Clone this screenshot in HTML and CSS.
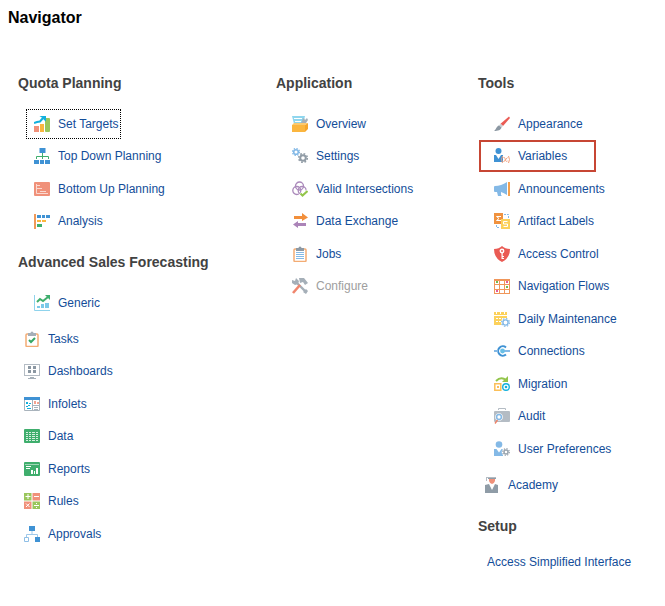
FILE: index.html
```html
<!DOCTYPE html>
<html lang="en">
<head>
  <meta charset="UTF-8">
  <title>Navigator</title>
  <link rel="stylesheet" href="styles.css">
</head>
<body>

  <h1>Navigator</h1>

  <nav class="navigator">
    <div class="column">
      <h2>Quota Planning</h2>
      <ul class="links">
        <li><a href="#" class="focused">
          <svg class="icon" viewBox="0 0 16 16"><path fill="#f0917a" d="M0 10h5v6H0z"/><path fill="#fbb63f" d="M6 8h4v8H6z"/><rect x="11" y="2" width="5" height="14" rx="1" fill="#9ac65c"/><path fill="none" stroke="#12b0dd" stroke-width="2" d="M0 7l3-1 3-.5L9 2"/><path fill="#12b0dd" d="M5.500 0H12v5.500L10 4 8.500 2z"/></svg>
          Set Targets</a></li>
        <li><a href="#">
          <svg class="icon" viewBox="0 0 16 16"><path fill="#3f92d4" d="M5.500 0h6v5h-6zM0 12h5v4H0zM6 12h4v4H6zM11 12h5v4h-5z"/><path fill="none" stroke="#3fae6d" d="M8.500 5v6M2.500 11V8.500h12V11"/></svg>
          Top Down Planning</a></li>
        <li><a href="#">
          <svg class="icon" viewBox="0 0 16 16"><rect y="1" width="16" height="14" rx="1" fill="#f0917a"/><path fill="none" stroke="#fbd9d0" d="M2.500 3v9.500H14M3 4.500h3M3 7.500h5M6 10.500h6"/></svg>
          Bottom Up Planning</a></li>
        <li><a href="#">
          <svg class="icon" viewBox="0 0 16 16"><path fill="#f09a58" d="M0 1h2v15H0z"/><path fill="#3f92d4" d="M3 2h4v3H3zM8 2h3v3H8zM12 2h4v3h-4z"/><path fill="#fbb63f" d="M3 7h4v2H3zM8 7h4v2H8z"/><path fill="#3fae6d" d="M3 11h5v3H3z"/></svg>
          Analysis</a></li>
      </ul>

      <h2>Advanced Sales Forecasting</h2>
      <ul class="links">
        <li><a href="#">
          <svg class="icon" viewBox="0 0 16 16"><path fill="none" stroke="#8fd3ec" d="M.5 0v15.500H16"/><path fill="#7dc9e8" d="M3 11h3v2H3zM7 9h3v4H7zM11 8h4v5h-4z"/><path fill="none" stroke="#3fae6d" stroke-width="2" d="M3 7l3-3 3 2 5-4"/><path fill="#3fae6d" d="M11 0h5v5z"/></svg>
          Generic</a></li>
      </ul>

      <ul class="links top-links">
        <li><a href="#">
          <svg class="icon" viewBox="0 0 16 16"><rect x="2" y="3" width="12" height="12.500" rx="1" fill="#fff" stroke="#f3ac74" stroke-width="1.500"/><path fill="#a5afb8" d="M4 2h2.500a1.500 1.500 0 0 1 3 0H12v3H4z"/><path fill="none" stroke="#35a766" stroke-width="2" d="M5 9l2 2 4-4"/></svg>
          Tasks</a></li>
        <li><a href="#">
          <svg class="icon" viewBox="0 0 16 16"><rect x=".5" y="1.500" width="15" height="11" fill="#fff" stroke="#b4bcc4"/><path fill="#8b97a2" d="M4 3h3v3H4zM9 3h3v3H9zM4 7h3v3H4zM9 7h3v3H9z"/><path fill="#a5afb8" d="M6 14h4v1h2v1H4v-1h2z"/></svg>
          Dashboards</a></li>
        <li><a href="#">
          <svg class="icon" viewBox="0 0 16 16"><path fill="#fff" stroke="#a9b3bc" d="M.5 1.500h15v13H.5z"/><path fill="#3f92d4" d="M0 1h16v3H0z"/><path fill="#12b0dd" d="M2 6h2v2H2zM5 7h2v1H5zM2 10h2v1H2zM4 9h2v1H4zM3 12h4v1H3z"/><path stroke="#a9b3bc" d="M8.500 4v11M9 9.500h7"/><path fill="#f3a391" d="M10 5h2v3h-2zM13 6h2v2h-2z"/><path fill="#a9b3bc" d="M10 11h4v1h-4zM10 13h4v1h-4z"/></svg>
          Infolets</a></li>
        <li><a href="#">
          <svg class="icon" viewBox="0 0 16 16"><rect y="1" width="16" height="14" rx="1" fill="#3fae6d"/><path fill="#d5efdf" d="M2 4h2v1H2zM5 4h2v1H5zM8 4h3v1H8zM12 4h2v1h-2zM2 6h2v1H2zM5 6h2v1H5zM8 6h3v1H8zM12 6h2v1h-2zM2 8h2v1H2zM5 8h2v1H5zM8 8h3v1H8zM12 8h2v1h-2zM2 10h2v1H2zM5 10h2v1H5zM8 10h3v1H8zM12 10h2v1h-2zM2 12h2v1H2zM5 12h2v1H5zM8 12h3v1H8zM12 12h2v1h-2z"/></svg>
          Data</a></li>
        <li><a href="#">
          <svg class="icon" viewBox="0 0 16 16"><rect y="1" width="16" height="14" rx="1" fill="#3fae6d"/><path fill="#fff" d="M2 5h5v1H2zM2 7h4v1H2zM7 9h2v4H7zM10 10h1v3h-1zM12 7h2v6h-2z"/><path fill="#9fd6b5" d="M1 3h14v1H1z"/></svg>
          Reports</a></li>
        <li><a href="#">
          <svg class="icon" viewBox="0 0 16 16"><path fill="#9ac65c" d="M0 0h7.500v7.500H0zM8.500 8.500H16V16H8.500z"/><path fill="#f0917a" d="M8.500 0H16v7.500H8.500zM0 8.500h7.500V16H0z"/><path stroke="#fff" d="M1.500 3.500h5M4 1v5M10 3.500h5M2 10.500l3.500 3.500M5.500 10.500L2 14M10 12.500h5M12.500 10v1M12.500 14v1"/></svg>
          Rules</a></li>
        <li><a href="#">
          <svg class="icon" viewBox="0 0 16 16"><path fill="#3f92d4" d="M5 0h6v5H5zM11 11h5v5h-5z"/><path fill="none" stroke="#9fc9ea" d="M8 5v3M2.500 11V8.500h11V11"/><path fill="#fff" stroke="#8fbfe6" d="M.5 11.500h4v4h-4z"/></svg>
          Approvals</a></li>
      </ul>
    </div>

    <div class="column">
      <h2>Application</h2>
      <ul class="links">
        <li><a href="#">
          <svg class="icon" viewBox="0 0 16 16"><path fill="#8fd6ee" d="M0 0h13l-2 8H2z"/><path fill="none" stroke="#fff" d="M2 2.500h8M3 5.500h6"/><path fill="none" stroke="#a5afb8" stroke-width="2" d="M8 9l4-4"/><path fill="#a5afb8" d="M15 2l-2 2-1-2-2 2 1 3 3 0 2-3z"/><path fill="#fbb63f" d="M0 9h13v7H0z"/><path fill="#fcc96f" d="M0 9l2-2h14l-3 2z"/><path fill="#f5a52c" d="M13 9l3-2v6l-3 3z"/></svg>
          Overview</a></li>
        <li><a href="#">
          <svg class="icon" viewBox="0 0 16 16"><circle cx="4" cy="4" r="2.300" fill="none" stroke="#84b9e6" stroke-width="1.600"/><circle cx="4" cy="4" r="3.500" fill="none" stroke="#84b9e6" stroke-width="1.200" stroke-dasharray="1.400 1.350"/><circle cx="11" cy="10" r="2.800" fill="none" stroke="#919ca6" stroke-width="2"/><circle cx="11" cy="10" r="4.300" fill="none" stroke="#919ca6" stroke-width="1.600" stroke-dasharray="1.700 1.680"/></svg>
          Settings</a></li>
        <li><a href="#">
          <svg class="icon" viewBox="0 0 16 16"><g fill="none" stroke="#ab8abb" stroke-width="1.300"><circle cx="7.500" cy="5" r="4"/><circle cx="4.800" cy="9.500" r="4"/><circle cx="10.200" cy="9.500" r="4"/></g><path fill="none" stroke="#fff" stroke-width="4" d="M8 12.500l2.500 2.500L16 10"/><path fill="none" stroke="#93c54b" stroke-width="2" d="M8.500 12.500l2 2L15.500 10"/></svg>
          Valid Intersections</a></li>
        <li><a href="#">
          <svg class="icon" viewBox="0 0 16 16"><path fill="#f28f3b" d="M2 3h8V0l6 4.500L10 8V6H2z"/><path fill="#ab84b8" d="M14 10H6V8l-5 3.500L6 15v-2h8z"/></svg>
          Data Exchange</a></li>
        <li><a href="#">
          <svg class="icon" viewBox="0 0 16 16"><rect x="2" y="3" width="12" height="12.500" rx="1" fill="#fff" stroke="#f3ac74" stroke-width="1.500"/><path fill="#8d99a4" d="M4 2h2.500a1.500 1.500 0 0 1 3 0H12v3H4z"/><path stroke="#84b9e6" d="M4 6.500h8M4 8.500h8M4 10.500h8M4 12.500h8"/></svg>
          Jobs</a></li>
        <li><a class="disabled" aria-disabled="true">
          <svg class="icon" viewBox="0 0 16 16"><path fill="none" stroke="#a5afb8" stroke-width="2.400" d="M4 4l10 10"/><path fill="#a5afb8" d="M0 2l3 1 1-3 3 3-1 3-3 1-3-2zM7 0h5l4 5-3 2-2-3-3 1zM14 11l2 2-2 3-3-2z"/><path fill="none" stroke="#f0866d" stroke-width="2.600" d="M1 15l7-8"/></svg>
          Configure</a></li>
      </ul>
    </div>

    <div class="column">
      <h2>Tools</h2>
      <ul class="links">
        <li><a href="#">
          <svg class="icon" viewBox="0 0 16 16"><path fill="#ea5b54" d="M15 .5l1 1.500-7 8-2.500-2.200z"/><path fill="#c9ced3" d="M6.500 7.800L9 10l-1.500 1.500L5 9.500z"/><path fill="#8b97a2" d="M5 9.500l2.500 2C7 14 4 15 0 15c2-1 2.500-5 5-5.500z"/></svg>
          Appearance</a></li>
        <li class="highlight"><a href="#">
          <svg class="icon" viewBox="0 0 16 16"><circle cx="4.500" cy="3" r="3" fill="#3f92d4"/><path fill="#3f92d4" d="M0 7h2l2.500 4L7 7h2v7H0z"/><g fill="none" stroke="#f2a07c"><path d="M8.500 8q-2 3.500 0 7M14.500 8q2 3.500 0 7M9.500 9.500q1-.5 1.500 1l.5 2q.5 1.500 2 .5M13.500 9.500l-4 4.500"/></g></svg>
          Variables</a></li>
        <li><a href="#">
          <svg class="icon" viewBox="0 0 16 16"><path fill="#84b9e6" d="M0 6q0-1 1-1 6 0 12-4v13q-3-2-6-3v3l1 1H4l-1-4H1q-1 0-1-1z"/><path fill="#f5a04c" d="M14 1h2v14h-2z"/></svg>
          Announcements</a></li>
        <li><a href="#">
          <svg class="icon" viewBox="0 0 16 16"><path fill="#f0923f" d="M0 0h9v11H0z"/><path fill="none" stroke="#fff" d="M7 3.500H2.500L5 5.500l-2.500 2H7"/><path fill="#fcd15b" d="M7 6h9v10H7z"/><path fill="none" stroke="#fff" d="M13.500 8.500h-4V11h4v2.500h-4"/><path fill="none" stroke="#84b9e6" stroke-dasharray="2 1" d="M10 1.500h4.500V6M2.500 12v2.500H6"/></svg>
          Artifact Labels</a></li>
        <li><a href="#">
          <svg class="icon" viewBox="0 0 16 16"><path fill="#ea5b54" d="M8 0q3 3 8 3 0 9-8 13Q0 12 0 3q5 0 8-3z"/><circle cx="8" cy="5" r="1.700" fill="none" stroke="#fff" stroke-width="1.500"/><path fill="#fff" d="M7.500 7h1.200v6H7.500zM8 10h2v1H8zM8 12h2v1H8z"/></svg>
          Access Control</a></li>
        <li><a href="#">
          <svg class="icon" viewBox="0 0 16 16"><path fill="#f0965a" d="M0 1h16v15H0z"/><path fill="#fff" d="M1 3h4v3H1zM6 3h4v3H6zM11 3h4v3h-4zM1 7h4v4H1zM6 7h4v4H6zM11 7h4v4h-4zM1 12h4v3H1zM6 12h4v3H6zM11 12h4v3h-4z"/><path fill="#e35b9a" d="M12 3h2v2h-2zM2 12h2v2H2z"/><path fill="#75ba50" d="M2 3h2v2H2zM12 8h2v2h-2z"/></svg>
          Navigation Flows</a></li>
        <li><a href="#">
          <svg class="icon" viewBox="0 0 16 16"><path fill="#fcd15b" d="M0 1h13v3H0zM0 5h13v9H0z"/><path fill="#fff" d="M2 1h1v2H2zM6 1h1v2H6zM10 1h1v2h-1zM2 7h2v1H2zM5 7h2v1H5zM8 7h3v1H8zM2 10h2v1H2zM5 10h2v1H5z"/><circle cx="11.500" cy="11.500" r="4.500" fill="#fff"/><circle cx="11.500" cy="11.500" r="2.600" fill="none" stroke="#84b9e6" stroke-width="1.400"/><circle cx="11.500" cy="11.500" r="3.900" fill="none" stroke="#84b9e6" stroke-width="1.200" stroke-dasharray="1.500 1.560"/></svg>
          Daily Maintenance</a></li>
        <li><a href="#">
          <svg class="icon" viewBox="0 0 16 16"><path fill="none" stroke="#3f92d4" stroke-width="2" d="M12 4.500a4.700 4.700 0 1 0 0 7"/><path stroke="#84b9e6" stroke-width="2" d="M0 8h4M9 8h7"/><circle cx="8.500" cy="8" r="2.400" fill="#69bfe6"/></svg>
          Connections</a></li>
        <li><a href="#">
          <svg class="icon" viewBox="0 0 16 16"><path fill="none" stroke="#93c54b" stroke-width="2" d="M2 5q5-5 10-1"/><path fill="#93c54b" d="M14 0v6H8z"/><path fill="none" stroke="#fbbf58" stroke-width="1.500" d="M.8 7.800h6v6.500h-6z"/><path fill="#fbbf58" d="M3 10h2v2H3z"/><circle cx="12" cy="11" r="3.300" fill="none" stroke="#12b0dd" stroke-width="1.400"/><circle cx="12" cy="11" r="1.300" fill="#12b0dd"/></svg>
          Migration</a></li>
        <li><a href="#">
          <svg class="icon" viewBox="0 0 16 16"><path fill="none" stroke="#b4bcc4" d="M4.500 2V.5h7V2"/><rect y="3" width="16" height="11" rx="1" fill="#b4bcc4"/><circle cx="5" cy="9" r="3.800" fill="#fff"/><circle cx="5" cy="9" r="2.400" fill="#fff" stroke="#84b9e6" stroke-width="1.500"/><path stroke="#ee8268" stroke-width="1.400" d="M3.500 12L1 15.500"/></svg>
          Audit</a></li>
        <li><a href="#">
          <svg class="icon" viewBox="0 0 16 16"><circle cx="5" cy="3.500" r="3.300" fill="#84b9e6"/><path fill="#84b9e6" d="M0 8h2.500L5 11.500 7.500 8H9v7H0z"/><circle cx="12" cy="11" r="4.300" fill="#fff"/><circle cx="12" cy="11" r="2" fill="none" stroke="#9aa5af" stroke-width="1.500"/><circle cx="12" cy="11" r="3.300" fill="none" stroke="#9aa5af" stroke-width="1.300" stroke-dasharray="1.300 1.290"/></svg>
          User Preferences</a></li>
      </ul>

      <ul class="links top-links">
        <li><a href="#">
          <svg class="icon" viewBox="0 0 16 16"><path fill="#b4bcc4" d="M2 0h10v1H3v3H2z"/><path fill="#8f9ca7" d="M4 1h8v1H4z"/><path fill="#f0917a" d="M5 2h6v2q-1 3-3 3T5 4z"/><path fill="#8f9ca7" d="M1 8l4-1 3 6 3-6 3 1v8H1z"/></svg>
          Academy</a></li>
      </ul>

      <h2>Setup</h2>
      <ul class="links plain-links">
        <li><a href="#">Access Simplified Interface</a></li>
      </ul>
    </div>
  </nav>

</body>
</html>
```
FILE: styles.css
```css
body { margin: 0; padding: 8px 0 24px; background: #fff; color: #000; font-family: "Liberation Sans", Arial, sans-serif; font-size: 12px; }
h1 { margin: 0 8px 45px; font-size: 16px; line-height: 20px; }
h2 { margin: 0 0 15px; color: #424242; font-size: 14px; line-height: 20px; white-space: nowrap; }

.navigator { display: grid; grid-template-columns: 258fr 202fr 187fr; padding-left: 18px; }

.links { list-style: none; margin: 0; padding: 0 0 0 9px; }
.links + h2 { margin-top: 15px; }
.links li { display: flex; align-items: center; width: fit-content; height: 32px; }
.links li:nth-child(even) { margin-bottom: 1px; }
.links a { display: flex; align-items: center; gap: 8px; height: 28px; padding: 0 2px 0 7px; color: #134d99; text-decoration: none; white-space: nowrap; }
.links a:hover { text-decoration: underline; }
.links a.focused { outline: 1px dotted #000; }
.links a.disabled { color: #9e9e9e; text-decoration: none; }

.top-links { margin-top: 4px; padding-left: 0; }
.top-links a { padding-left: 6px; }

.plain-links li { height: 22px; }
.plain-links a { padding-left: 0; }

/* red frame around the selected card */
.highlight { position: relative; }
.highlight::after { content: ""; position: absolute; inset: 0 -27px 0 -8px; border: 2px solid #c74634; pointer-events: none; }

.icon { width: 16px; height: 16px; flex: none; }
```
